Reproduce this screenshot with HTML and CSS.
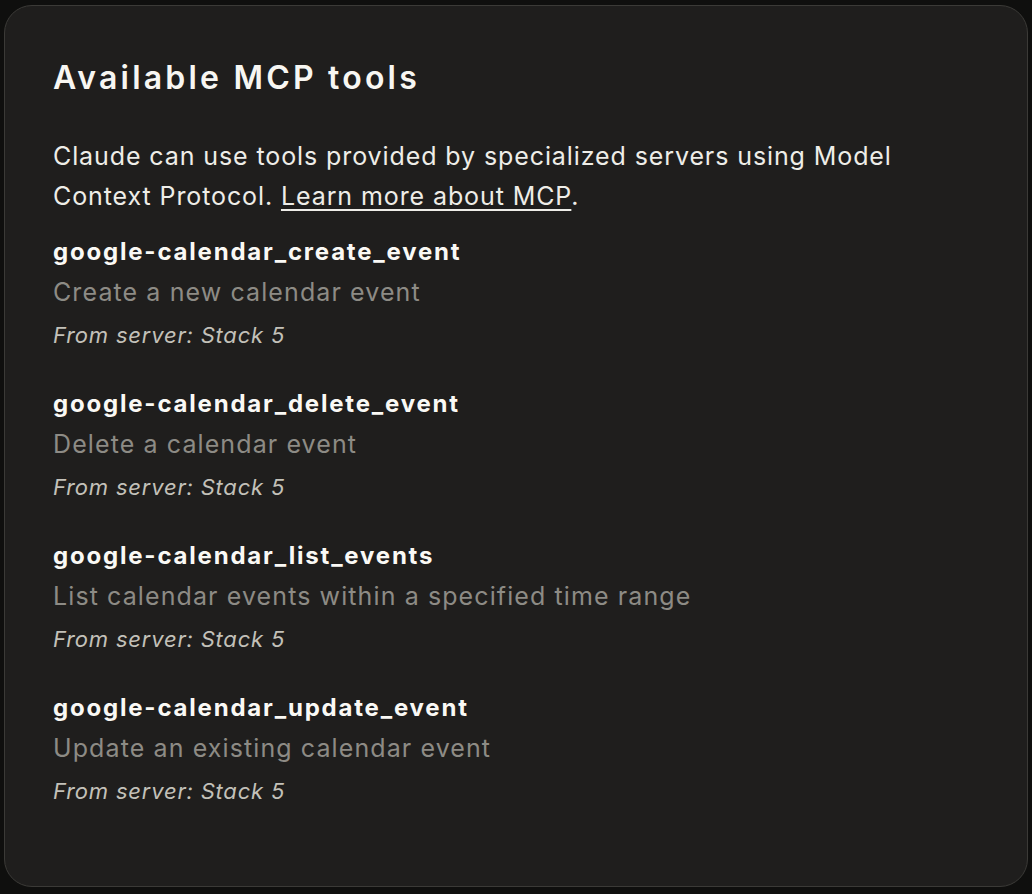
FILE: index.html
```html
<!DOCTYPE html>
<html lang="en">
<head>
<meta charset="utf-8">
<title>Available MCP tools</title>
<link rel="stylesheet" href="styles.css">
</head>
<body>
<div class="modal">
  <h2 class="title">Available MCP tools</h2>
  <p class="intro">Claude can use tools provided by specialized servers using Model Context Protocol. <a href="#" class="link">Learn more about MCP</a>.</p>
  <ul class="tools">
    <li class="tool">
      <div class="name">google-calendar_create_event</div>
      <div class="desc">Create a new calendar event</div>
      <div class="server">From server: Stack 5</div>
    </li>
    <li class="tool">
      <div class="name">google-calendar_delete_event</div>
      <div class="desc">Delete a calendar event</div>
      <div class="server">From server: Stack 5</div>
    </li>
    <li class="tool">
      <div class="name">google-calendar_list_events</div>
      <div class="desc">List calendar events within a specified time range</div>
      <div class="server">From server: Stack 5</div>
    </li>
    <li class="tool">
      <div class="name">google-calendar_update_event</div>
      <div class="desc">Update an existing calendar event</div>
      <div class="server">From server: Stack 5</div>
    </li>
  </ul>
</div>
</body>
</html>
```
FILE: styles.css
```css
html, body {
  margin: 0;
  padding: 0;
  background: #0f0f0e;
}
body {
  padding: 5px 4px 7px 4px;
  font-family: Inter, "Noto Sans", sans-serif;
}
.modal {
  box-sizing: border-box;
  width: 1024px;
  height: 882px;
  background: #1f1e1d;
  border: 1px solid #3b3a37;
  border-radius: 28px;
  padding: 52px 48px;
  display: flex;
  flex-direction: column;
}
.title {
  margin: 0;
  font-size: 32px;
  line-height: 40px;
  font-weight: 600;
  color: #f7f6f2;
  letter-spacing: 3.2px;
}
.intro {
  margin: 38px 0 0 0;
  max-width: 900px;
  font-size: 25px;
  line-height: 40px;
  color: #eeede8;
  font-weight: 400;
  letter-spacing: 0.9px;
}
.link {
  color: #eeede8;
  text-decoration: underline;
  text-underline-offset: 4px;
  text-decoration-thickness: 2px;
}
.tools {
  list-style: none;
  margin: 16px 0 0 0;
  padding: 0;
  display: flex;
  flex-direction: column;
  gap: 29px;
}
.tool {
  display: flex;
  flex-direction: column;
}
.name {
  font-size: 24px;
  line-height: 40px;
  font-weight: 700;
  color: #faf9f5;
  letter-spacing: 1.8px;
}
.desc {
  font-size: 25px;
  line-height: 40px;
  color: #8d8b85;
  letter-spacing: 1.1px;
}
.server {
  font-size: 22px;
  line-height: 40px;
  font-style: italic;
  color: #c3c1b9;
  margin-top: 3px;
  letter-spacing: 0.8px;
}
```
